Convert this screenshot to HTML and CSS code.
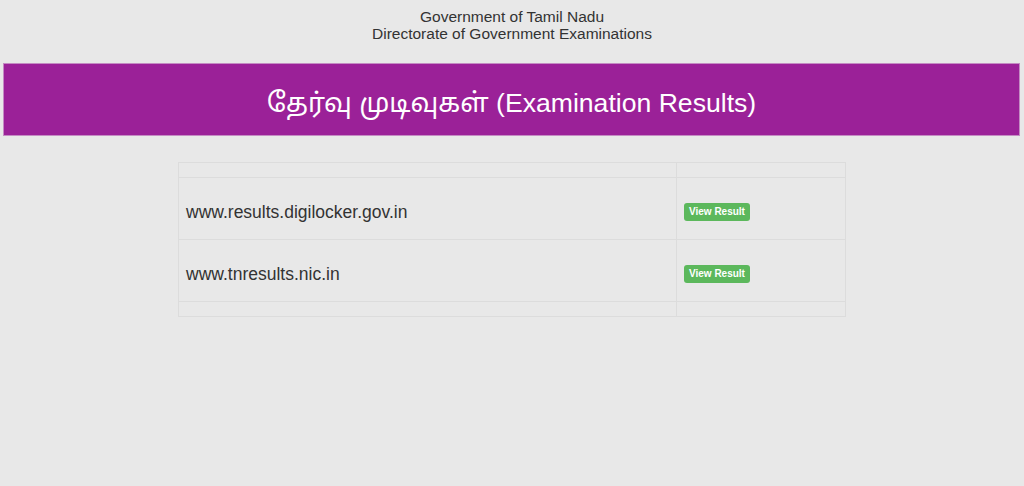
FILE: index.html
```html
<!DOCTYPE html>
<html>
<head>
<meta charset="utf-8">
<link rel="stylesheet" href="styles.css">
</head>
<body>
<header class="top">
  <div>Government of Tamil Nadu</div>
  <div>Directorate of Government Examinations</div>
</header>
<div class="banner">தேர்வு முடிவுகள் (Examination Results)</div>
<div class="wrap">
  <table class="results">
    <tr class="thin"><td class="c1"></td><td class="c2"></td></tr>
    <tr class="row"><td class="c1">www.results.digilocker.gov.in</td><td class="c2"><a class="btn" href="#">View Result</a></td></tr>
    <tr class="row"><td class="c1">www.tnresults.nic.in</td><td class="c2"><a class="btn" href="#">View Result</a></td></tr>
    <tr class="thin"><td class="c1"></td><td class="c2"></td></tr>
  </table>
</div>
</body>
</html>
```
FILE: styles.css
```css
html, body {
  margin: 0;
  padding: 0;
  background: #e8e8e8;
  font-family: "Liberation Sans", Arial, "Noto Sans Tamil", sans-serif;
  color: #333;
}
.top {
  text-align: center;
  font-size: 15.5px;
  line-height: 17px;
  padding-top: 8px;
  color: #333;
}
.banner {
  margin: 21px 4px 0 3px;
  height: 61px;
  background: #9b2198;
  border: 1px solid #c48bc3;
  color: #fff;
  font-size: 26.6px;
  display: flex;
  align-items: center;
  justify-content: center;
  padding-top: 10px;
  box-sizing: content-box;
}
.wrap {
  display: flex;
  justify-content: center;
  padding-top: 26px;
}
.results {
  width: 668px;
  border-collapse: collapse;
}
.results td {
  border: 1px solid #dcdcdc;
  padding: 0 7px;
}
.c1 { width: 483px; }
.thin td { height: 14px; }
.row td {
  height: 53px;
  padding-top: 8px;
  font-size: 17.5px;
}
.row td.c2 {
  height: 59px;
  padding-top: 2px;
}
.btn {
  display: inline-block;
  background: #5cb85c;
  color: #fff;
  font-size: 10px;
  font-weight: bold;
  text-decoration: none;
  padding: 4px 5px;
  border-radius: 3px;
  line-height: 10px;
}
```
